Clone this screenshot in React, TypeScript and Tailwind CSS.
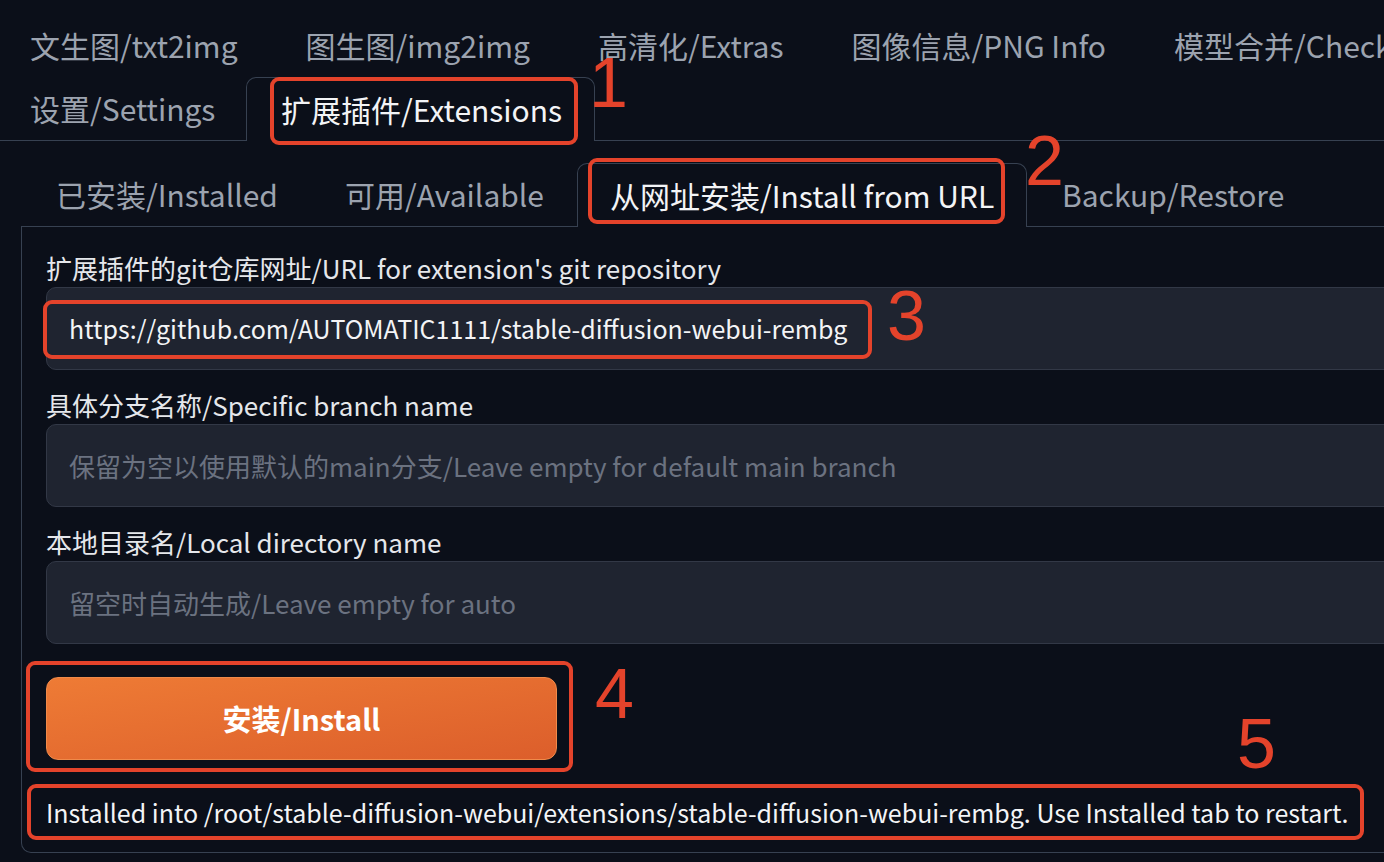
import React from "react";

const FONT = { fontFamily: '"Noto Sans CJK SC", "Noto Sans", sans-serif' };

function Label({ children }: { children: React.ReactNode }) {
  return <div className="h-[30px] text-[26px] leading-[30px] text-[#e5e7eb] whitespace-nowrap">{children}</div>;
}

function Input({ value, placeholder }: { value?: string; placeholder?: string }) {
  return (
    <div className="mt-[4px] h-[83px] rounded-[10px] border border-[#323846] bg-[#1f2430] flex items-center pl-[22px] whitespace-nowrap">
      {value ? (
        <span className="text-[25px] text-[#f3f4f6]">{value}</span>
      ) : (
        <span className="text-[26px] text-[#6b7280]">{placeholder}</span>
      )}
    </div>
  );
}

const redBox = "absolute border-[4px] border-[#e4432b] rounded-[9px] pointer-events-none";
const num = "absolute text-[70px] leading-none text-[#e4432b]";
const NUMFONT = { fontFamily: '"Liberation Sans", sans-serif' };

export default function App() {
  return (
    <div className="relative w-[1384px] h-[862px] overflow-hidden bg-[#0b0f19]" style={FONT}>
      {/* Top tabs */}
      <div className="pt-[13px]">
        <div className="flex h-[64px] items-center ml-[-4px] text-[30px] text-[#9ca3af] whitespace-nowrap">
          <div className="px-[34px]">文生图/txt2img</div>
          <div className="px-[34px]">图生图/img2img</div>
          <div className="px-[34px]">高清化/Extras</div>
          <div className="px-[34px]">图像信息/PNG Info</div>
          <div className="px-[34px]">模型合并/Checkpoint Merger</div>
        </div>
        <div className="flex h-[64px] text-[30px] whitespace-nowrap">
          <div className="w-[246px] flex items-center pl-[30px] border-b border-[#374151] text-[#9ca3af]">设置/Settings</div>
          <div className="w-[349px] flex items-center pl-[34px] border-l border-t border-r border-[#374151] rounded-t-[10px] text-[#f3f4f6]">扩展插件/Extensions</div>
          <div className="flex-1 border-b border-[#374151]" />
        </div>
      </div>

      {/* Sub tabs */}
      <div className="mt-[22px] ml-[21px] flex h-[64px] text-[30px] whitespace-nowrap">
        <div className="w-[289px] flex items-center pl-[35px] border-b border-[#374151] text-[#9ca3af]">已安装/Installed</div>
        <div className="w-[267px] flex items-center pl-[35px] border-b border-[#374151] text-[#9ca3af]">可用/Available</div>
        <div className="w-[450px] flex items-center pl-[32px] border-l border-t border-r border-[#374151] rounded-t-[10px] text-[#f3f4f6]">从网址安装/Install from URL</div>
        <div className="flex-1 flex items-center pl-[35px] border-b border-[#374151] text-[#9ca3af]">Backup/Restore</div>
      </div>

      {/* Panel */}
      <div className="ml-[21px] w-[1420px] border-l border-b border-[#374151] rounded-bl-[10px] pl-[24px] pt-[26px] pb-[25px]">
        <Label>扩展插件的git仓库网址/URL for extension's git repository</Label>
        <Input value="https://github.com/AUTOMATIC1111/stable-diffusion-webui-rembg" />
        <div className="mt-[20px]">
          <Label>具体分支名称/Specific branch name</Label>
        </div>
        <Input placeholder="保留为空以使用默认的main分支/Leave empty for default main branch" />
        <div className="mt-[20px]">
          <Label>本地目录名/Local directory name</Label>
        </div>
        <Input placeholder="留空时自动生成/Leave empty for auto" />
        <button className="mt-[33px] w-[511px] h-[83px] rounded-[12px] border border-[#f08a4a] bg-gradient-to-br from-[#ee7b35] to-[#dc5e2b] text-white text-[29px] font-bold flex items-center justify-center">
          安装/Install
        </button>
        <div className="mt-[37px] h-[30px] text-[25px] leading-[30px] text-[#f3f4f6] whitespace-nowrap">
          Installed into /root/stable-diffusion-webui/extensions/stable-diffusion-webui-rembg. Use Installed tab to restart.
        </div>
      </div>

      {/* Annotations */}
      <div className={redBox} style={{ left: 270, top: 77, width: 308, height: 68 }} />
      <div className={redBox} style={{ left: 588, top: 158, width: 417, height: 66 }} />
      <div className={redBox} style={{ left: 43, top: 300, width: 829, height: 59 }} />
      <div className={redBox} style={{ left: 26, top: 661, width: 547, height: 111 }} />
      <div className={redBox} style={{ left: 27, top: 784, width: 1337, height: 56 }} />
      <div className={num} style={{ left: 589, top: 48, ...NUMFONT }}>1</div>
      <div className={num} style={{ left: 1025, top: 126, ...NUMFONT }}>2</div>
      <div className={num} style={{ left: 887, top: 281, ...NUMFONT }}>3</div>
      <div className={num} style={{ left: 595, top: 659, ...NUMFONT }}>4</div>
      <div className={num} style={{ left: 1237, top: 709, ...NUMFONT }}>5</div>
    </div>
  );
}
